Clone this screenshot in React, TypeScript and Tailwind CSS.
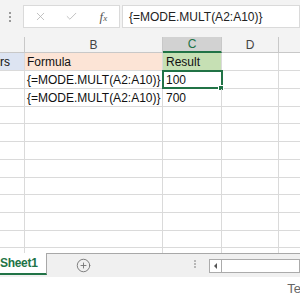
import { X, Check, CirclePlus } from "lucide-react";

const font = { fontFamily: '"Liberation Sans", Arial, sans-serif' };

const rowHeights = [18, 18, 18, 17, 18, 18, 18, 17, 18, 18, 17, 18];

const rows: { a?: string; b?: string; c?: string; header?: boolean }[] = [
  { a: "rs", b: "Formula", c: "Result", header: true },
  { b: "{=MODE.MULT(A2:A10)}", c: "100" },
  { b: "{=MODE.MULT(A2:A10)}", c: "700" },
];

function FormulaBar() {
  return (
    <div className="h-[37px] shrink-0 bg-[#f3f3f3] flex items-start pt-[5px]">
      <div className="w-[23px] h-[22px] flex items-center justify-center">
        <div className="flex flex-col gap-[2px] -ml-[3px] mt-[1px]">
          <span className="w-[2px] h-[2px] bg-[#9a9a9a]" />
          <span className="w-[2px] h-[2px] bg-[#9a9a9a]" />
          <span className="w-[2px] h-[2px] bg-[#9a9a9a]" />
        </div>
      </div>
      <div className="w-[97px] h-[23px] bg-white border border-[#dadada] flex items-center">
        <div className="w-[32px] flex justify-center ml-[1px]">
          <X size={13} strokeWidth={1.5} className="text-[#b4b4b4]" />
        </div>
        <div className="w-[32px] flex justify-center">
          <Check size={13} strokeWidth={1.5} className="text-[#b4b4b4]" />
        </div>
        <div className="w-[32px] flex justify-center items-baseline text-[#555]" style={{ fontFamily: '"Liberation Serif", serif' }}>
          <span className="italic text-[13px]">f</span>
          <span className="italic text-[9px]">x</span>
        </div>
      </div>
      <div className="ml-[2px] flex-1 h-[23px] bg-white border border-[#dadada] flex items-center pl-[6px] text-[12px] text-[#222] whitespace-nowrap overflow-hidden">
        {"{=MODE.MULT(A2:A10)}"}
      </div>
    </div>
  );
}

function HeaderRow() {
  return (
    <div className="h-[16px] shrink-0 flex bg-[#f3f3f3] text-[12px] text-[#444]">
      <div className="w-[25px] border-r border-b border-[#c8c8c8]" />
      <div className="w-[138px] border-r border-b border-[#c8c8c8] flex items-center justify-center">B</div>
      <div className="w-[59px] border-r border-[#c8c8c8] bg-[#d2d2d2] border-b-2 border-b-[#217346] flex items-center justify-center text-[#217346]">
        C
      </div>
      <div className="w-[57px] border-r border-b border-[#c8c8c8] flex items-center justify-center">D</div>
      <div className="flex-1 border-b border-[#c8c8c8]" />
    </div>
  );
}

function Grid() {
  return (
    <div className="h-[200px] shrink-0 overflow-hidden bg-white text-[12px] text-[#111]">
      {rowHeights.map((h, i) => {
        const r = rows[i] ?? {};
        const line = "border-r border-b border-[#dadada]";
        return (
          <div key={i} className="flex" style={{ height: h }}>
            <div
              className={`w-[25px] ${line} flex items-center whitespace-nowrap ${
                r.header ? "bg-[#dde4f2]" : ""
              }`}
            >
              {r.a}
            </div>
            <div
              className={`w-[138px] ${line} flex items-center pl-[2px] whitespace-nowrap overflow-hidden ${
                r.header ? "bg-[#fce4d6]" : ""
              }`}
            >
              {r.b}
            </div>
            <div
              className={`relative w-[59px] ${line} flex items-center pl-[3px] ${r.header ? "bg-[#c6e0b4]" : ""}`}
            >
              {r.c}
              {i === 1 && (
                <>
                  <div className="absolute -top-[1px] -left-[1px] w-[61px] h-[19px] border-2 border-[#217346]" />
                  <div className="absolute top-[14px] left-[55px] w-[6px] h-[6px] bg-[#217346] border border-white" />
                </>
              )}
            </div>
            <div className={`w-[57px] ${line}`} />
            <div className="flex-1 border-b border-[#dadada]" />
          </div>
        );
      })}
    </div>
  );
}

function TabBar() {
  return (
    <div className="h-[24px] shrink-0 flex bg-[#f0f0f0]">
      <div className="w-[47px] bg-white border-r border-[#a8a8a8] border-b-2 border-b-[#217346] mb-[2px] flex items-center overflow-hidden">
        <span className="text-[12px] font-bold tracking-[-0.3px] text-[#217346] whitespace-nowrap">Sheet1</span>
      </div>
      <div className="flex-1 border-t border-[#a8a8a8] flex items-start">
        <div className="w-[72px] h-[22px] flex items-center justify-center">
          <CirclePlus size={15} strokeWidth={1.5} className="text-[#777]" />
        </div>
        <div className="w-[81px] flex justify-end pt-[6px]">
          <div className="flex flex-col gap-[1px] mr-[4px]">
            <span className="w-[2px] h-[2px] bg-[#b8b8b8]" />
            <span className="w-[2px] h-[2px] bg-[#b8b8b8]" />
            <span className="w-[2px] h-[2px] bg-[#b8b8b8]" />
          </div>
        </div>
        <div className="ml-[9px] mt-[5px] flex-1 h-[14px] border border-[#ababab] bg-white flex">
          <div className="w-[12px] border-r border-[#ababab] flex items-center justify-center">
            <span className="w-0 h-0 border-y-[3px] border-y-transparent border-r-[3px] border-r-[#555]" />
          </div>
        </div>
      </div>
    </div>
  );
}

export default function App() {
  return (
    <div className="w-[300px] h-[300px] overflow-hidden flex flex-col bg-white" style={font}>
      <FormulaBar />
      <HeaderRow />
      <Grid />
      <TabBar />
      <div className="flex-1 flex items-center justify-end text-[13px] text-[#666] overflow-hidden">
        <span className="mr-[-1px]">Te</span>
      </div>
    </div>
  );
}
